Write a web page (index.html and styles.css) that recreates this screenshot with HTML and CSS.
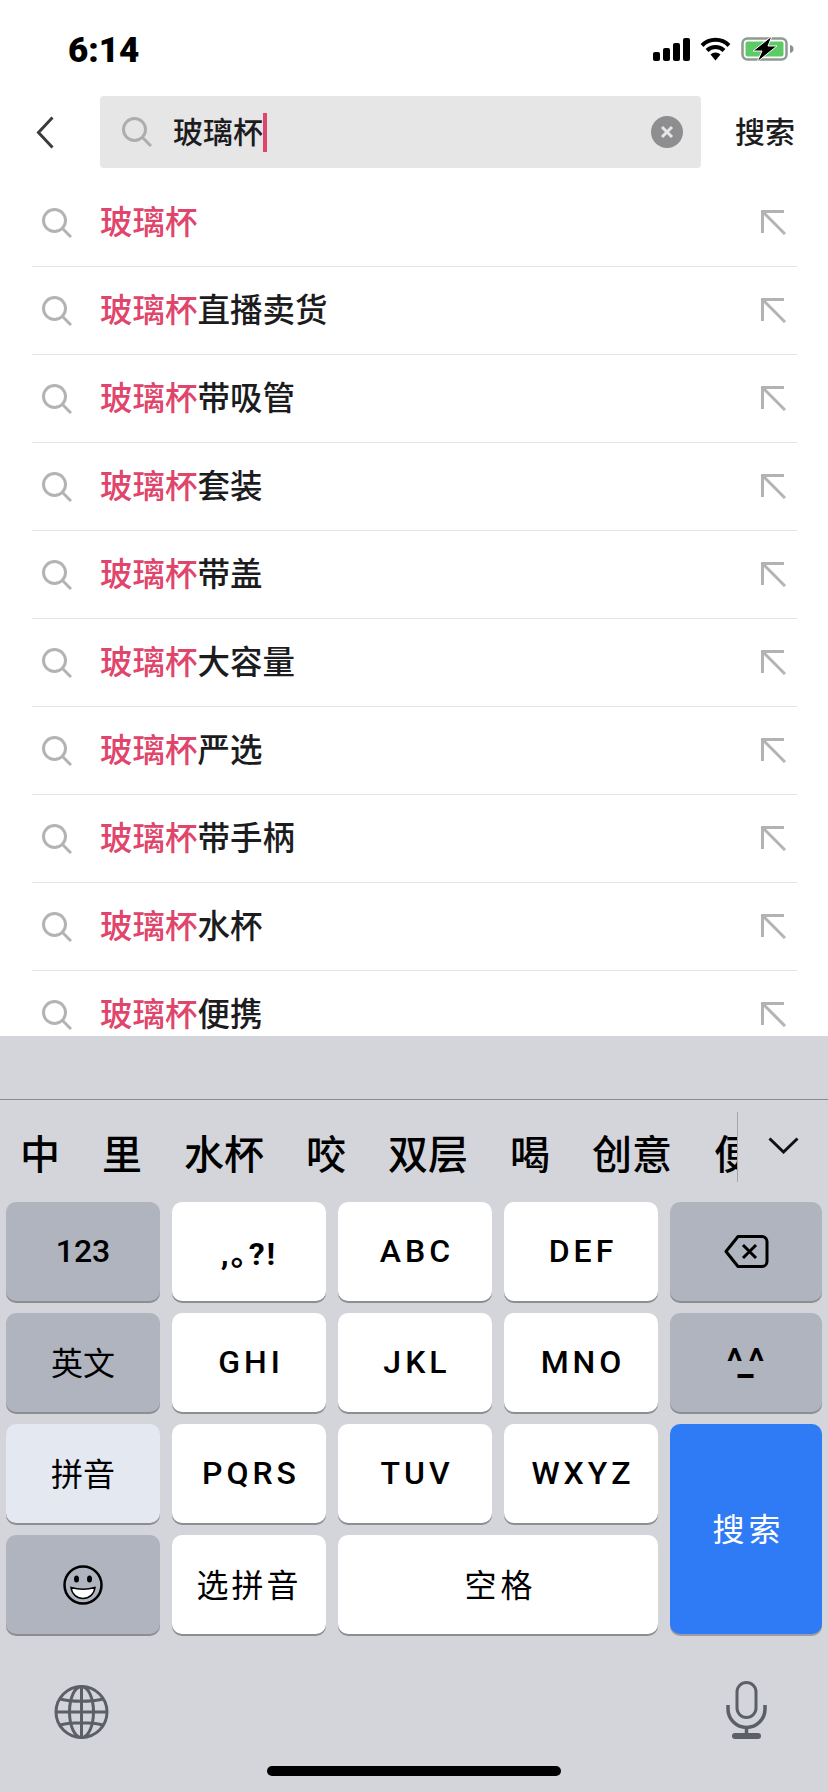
FILE: index.html
```html
<!DOCTYPE html>
<html lang="zh-CN">
<head>
    <meta charset="UTF-8">
    <meta name="viewport" content="width=device-width, initial-scale=1.0">
    <title>搜索</title>
    <link rel="stylesheet" href="styles.css">
</head>
<body>
    <div class="page">
        <div class="status-bar">
            <span class="time">6:14</span>
            <div class="status-icons">
                <svg width="37" height="23" viewBox="0 0 37 23"><rect x="0" y="14" width="7" height="9" rx="2"/><rect x="10" y="10" width="7" height="13" rx="2"/><rect x="20" y="5" width="7" height="18" rx="2"/><rect x="30" y="0" width="7" height="23" rx="2"/></svg>
                <svg width="31" height="24" viewBox="0 0 31 24"><path d="M2 8.500a19 19 0 0 1 27 0M7 13.500a12 12 0 0 1 17 0" fill="none" stroke="#000" stroke-width="4"/><path d="M10.500 17.500a7 7 0 0 1 10 0L15.500 23.500z"/></svg>
                <svg width="53" height="26" viewBox="0 0 53 26"><rect x="1.500" y="2.500" width="44" height="21" rx="5" fill="#fff" stroke="#8f9a90" stroke-width="2.500"/><rect x="4.500" y="5.500" width="38" height="15" rx="2" fill="#5ccb66"/><path d="M49 9c2.500 .5 3.500 2 3.500 4s-1 3.500-3.500 4z" fill="#8f8f93"/><path d="M31 0L12 15h9l-5 11 20-16h-9z" stroke="#fff" stroke-width="1"/></svg>
            </div>
        </div>

        <div class="search-row">
            <svg class="back" width="18" height="33" viewBox="0 0 18 33"><path d="M16.500 1.500L2.500 16.500 16.500 31.500" fill="none" stroke="#3c3c3e" stroke-width="3"/></svg>
            <div class="search-box">
                <svg class="icon-search" width="30" height="30" viewBox="0 0 30 30"><circle cx="12.500" cy="12.500" r="11" fill="none" stroke="#adadad" stroke-width="3"/><path d="M20.500 20.500L29 29" stroke="#adadad" stroke-width="3"/></svg>
                <span class="query">玻璃杯</span><span class="caret"></span>
                <svg class="clear" width="32" height="32" viewBox="0 0 32 32"><circle cx="16" cy="16" r="16" fill="#8e8e90"/><path d="M11 11l10 10M21 11L11 21" stroke="#e6e6e6" stroke-width="3"/></svg>
            </div>
            <span class="search-btn">搜索</span>
        </div>

        <div class="suggest-list">
            <div class="suggest-row"><svg class="icon-search" width="30" height="30" viewBox="0 0 30 30"><circle cx="12.500" cy="12.500" r="11" fill="none" stroke="#b3b3b3" stroke-width="3"/><path d="M20.500 20.500L29 29" stroke="#b3b3b3" stroke-width="3"/></svg><span class="suggest-text"><em>玻璃杯</em></span><svg class="icon-fill" width="25" height="25" viewBox="0 0 25 25"><path d="M1.500 23V1.500H23M1.500 1.500L24 24" fill="none" stroke="#b3b3b3" stroke-width="3"/></svg></div>
            <div class="suggest-row"><svg class="icon-search" width="30" height="30" viewBox="0 0 30 30"><circle cx="12.500" cy="12.500" r="11" fill="none" stroke="#b3b3b3" stroke-width="3"/><path d="M20.500 20.500L29 29" stroke="#b3b3b3" stroke-width="3"/></svg><span class="suggest-text"><em>玻璃杯</em>直播卖货</span><svg class="icon-fill" width="25" height="25" viewBox="0 0 25 25"><path d="M1.500 23V1.500H23M1.500 1.500L24 24" fill="none" stroke="#b3b3b3" stroke-width="3"/></svg></div>
            <div class="suggest-row"><svg class="icon-search" width="30" height="30" viewBox="0 0 30 30"><circle cx="12.500" cy="12.500" r="11" fill="none" stroke="#b3b3b3" stroke-width="3"/><path d="M20.500 20.500L29 29" stroke="#b3b3b3" stroke-width="3"/></svg><span class="suggest-text"><em>玻璃杯</em>带吸管</span><svg class="icon-fill" width="25" height="25" viewBox="0 0 25 25"><path d="M1.500 23V1.500H23M1.500 1.500L24 24" fill="none" stroke="#b3b3b3" stroke-width="3"/></svg></div>
            <div class="suggest-row"><svg class="icon-search" width="30" height="30" viewBox="0 0 30 30"><circle cx="12.500" cy="12.500" r="11" fill="none" stroke="#b3b3b3" stroke-width="3"/><path d="M20.500 20.500L29 29" stroke="#b3b3b3" stroke-width="3"/></svg><span class="suggest-text"><em>玻璃杯</em>套装</span><svg class="icon-fill" width="25" height="25" viewBox="0 0 25 25"><path d="M1.500 23V1.500H23M1.500 1.500L24 24" fill="none" stroke="#b3b3b3" stroke-width="3"/></svg></div>
            <div class="suggest-row"><svg class="icon-search" width="30" height="30" viewBox="0 0 30 30"><circle cx="12.500" cy="12.500" r="11" fill="none" stroke="#b3b3b3" stroke-width="3"/><path d="M20.500 20.500L29 29" stroke="#b3b3b3" stroke-width="3"/></svg><span class="suggest-text"><em>玻璃杯</em>带盖</span><svg class="icon-fill" width="25" height="25" viewBox="0 0 25 25"><path d="M1.500 23V1.500H23M1.500 1.500L24 24" fill="none" stroke="#b3b3b3" stroke-width="3"/></svg></div>
            <div class="suggest-row"><svg class="icon-search" width="30" height="30" viewBox="0 0 30 30"><circle cx="12.500" cy="12.500" r="11" fill="none" stroke="#b3b3b3" stroke-width="3"/><path d="M20.500 20.500L29 29" stroke="#b3b3b3" stroke-width="3"/></svg><span class="suggest-text"><em>玻璃杯</em>大容量</span><svg class="icon-fill" width="25" height="25" viewBox="0 0 25 25"><path d="M1.500 23V1.500H23M1.500 1.500L24 24" fill="none" stroke="#b3b3b3" stroke-width="3"/></svg></div>
            <div class="suggest-row"><svg class="icon-search" width="30" height="30" viewBox="0 0 30 30"><circle cx="12.500" cy="12.500" r="11" fill="none" stroke="#b3b3b3" stroke-width="3"/><path d="M20.500 20.500L29 29" stroke="#b3b3b3" stroke-width="3"/></svg><span class="suggest-text"><em>玻璃杯</em>严选</span><svg class="icon-fill" width="25" height="25" viewBox="0 0 25 25"><path d="M1.500 23V1.500H23M1.500 1.500L24 24" fill="none" stroke="#b3b3b3" stroke-width="3"/></svg></div>
            <div class="suggest-row"><svg class="icon-search" width="30" height="30" viewBox="0 0 30 30"><circle cx="12.500" cy="12.500" r="11" fill="none" stroke="#b3b3b3" stroke-width="3"/><path d="M20.500 20.500L29 29" stroke="#b3b3b3" stroke-width="3"/></svg><span class="suggest-text"><em>玻璃杯</em>带手柄</span><svg class="icon-fill" width="25" height="25" viewBox="0 0 25 25"><path d="M1.500 23V1.500H23M1.500 1.500L24 24" fill="none" stroke="#b3b3b3" stroke-width="3"/></svg></div>
            <div class="suggest-row"><svg class="icon-search" width="30" height="30" viewBox="0 0 30 30"><circle cx="12.500" cy="12.500" r="11" fill="none" stroke="#b3b3b3" stroke-width="3"/><path d="M20.500 20.500L29 29" stroke="#b3b3b3" stroke-width="3"/></svg><span class="suggest-text"><em>玻璃杯</em>水杯</span><svg class="icon-fill" width="25" height="25" viewBox="0 0 25 25"><path d="M1.500 23V1.500H23M1.500 1.500L24 24" fill="none" stroke="#b3b3b3" stroke-width="3"/></svg></div>
            <div class="suggest-row"><svg class="icon-search" width="30" height="30" viewBox="0 0 30 30"><circle cx="12.500" cy="12.500" r="11" fill="none" stroke="#b3b3b3" stroke-width="3"/><path d="M20.500 20.500L29 29" stroke="#b3b3b3" stroke-width="3"/></svg><span class="suggest-text"><em>玻璃杯</em>便携</span><svg class="icon-fill" width="25" height="25" viewBox="0 0 25 25"><path d="M1.500 23V1.500H23M1.500 1.500L24 24" fill="none" stroke="#b3b3b3" stroke-width="3"/></svg></div>
        </div>

        <div class="keyboard">
            <div class="kb-top"></div>
            <div class="candidates">
                <div class="candidate-scroll">
                    <span>中</span><span>里</span><span>水杯</span><span>咬</span><span>双层</span><span>喝</span><span>创意</span><span>便携</span>
                </div>
                <svg class="cand-more" width="31" height="17" viewBox="0 0 31 17"><path d="M1.500 1.500L15.500 15 29.500 1.500" fill="none" stroke="#111" stroke-width="3"/></svg>
            </div>

            <div class="keys">
                <div class="key dark latin">123</div>
                <div class="key latin punct">,｡?!</div>
                <div class="key latin spaced">ABC</div>
                <div class="key latin spaced">DEF</div>
                <div class="key dark">
                    <svg width="45" height="33" viewBox="0 0 45 33"><path d="M14 1.500H38a5 5 0 0 1 5 5v20a5 5 0 0 1-5 5H14L2 16.500z" fill="none" stroke="#000" stroke-width="3" stroke-linejoin="round"/><path d="M19 10l13 13M32 10L19 23" stroke="#000" stroke-width="3"/></svg>
                </div>

                <div class="key dark cjk">英文</div>
                <div class="key latin spaced">GHI</div>
                <div class="key latin spaced">JKL</div>
                <div class="key latin spaced">MNO</div>
                <div class="key dark latin face">^_^</div>

                <div class="key light cjk">拼音</div>
                <div class="key latin spaced">PQRS</div>
                <div class="key latin spaced">TUV</div>
                <div class="key latin spaced">WXYZ</div>
                <div class="key blue cjk wide-text">搜索</div>

                <div class="key dark">
                    <svg width="40" height="40" viewBox="0 0 40 40"><circle cx="20" cy="20" r="18.500" fill="none" stroke="#000" stroke-width="2.500"/><ellipse cx="13.500" cy="14" rx="2.500" ry="3.500"/><ellipse cx="26.500" cy="14" rx="2.500" ry="3.500"/><path d="M8 22.500c7 2 17 2 24 0-1 7-6 11-12 11s-11-4-12-11z" stroke="#000" stroke-width="1.500" fill="#fff"/></svg>
                </div>
                <div class="key cjk spaced-cjk">选拼音</div>
                <div class="key cjk wide-text space-key">空格</div>
            </div>

            <div class="kb-bottom">
                <svg width="55" height="54" viewBox="0 0 55 54" fill="none" stroke="#5d5f67" stroke-width="3"><circle cx="27.500" cy="27" r="25.500"/><ellipse cx="27.500" cy="27" rx="12" ry="25.500"/><path d="M27.500 1.500v51M2 27h51M6 14c12 3 31 3 43 0M6 40c12-3 31-3 43 0"/></svg>
                <svg width="41" height="58" viewBox="0 0 41 58"><rect x="11" y="1.500" width="19" height="35" rx="9.500" fill="none" stroke="#5d5f67" stroke-width="3"/><path d="M2 24v4a18.500 18.500 0 0 0 37 0v-4" fill="none" stroke="#5d5f67" stroke-width="3.500"/><path d="M20.500 46v8" stroke="#5d5f67" stroke-width="3.500"/><rect x="6" y="52" width="29" height="6" rx="3" fill="#5d5f67"/></svg>
            </div>
            <div class="home-bar"></div>
        </div>
    </div>
</body>
</html>
```

FILE: styles.css
```css
* {
    box-sizing: border-box;
}
body {
    margin: 0;
    background-color: #fff;
    font-family: "Noto Sans CJK SC", Roboto, sans-serif;
    color: #1c1c1e;
}
svg {
    display: block;
    flex-shrink: 0;
}
.page {
    width: 828px;
    height: 1792px;
    display: flex;
    flex-direction: column;
    overflow: hidden;
}

/* status bar */
.status-bar {
    height: 96px;
    padding: 37px 34px 0 68px;
    display: flex;
    justify-content: space-between;
    align-items: flex-start;
}
.time {
    font-family: Roboto, sans-serif;
    font-weight: 900;
    font-size: 35px;
    line-height: 28px;
    color: #000;
}
.status-icons {
    display: flex;
    align-items: center;
    gap: 10px;
    margin-top: -1px;
}

/* search */
.search-row {
    height: 72px;
    margin-bottom: 11px;
    padding: 0 33px 0 36px;
    display: flex;
    align-items: center;
}
.back {
    margin-right: 46px;
}
.search-box {
    width: 601px;
    height: 72px;
    padding: 0 18px 0 22px;
    display: flex;
    align-items: center;
    background-color: #e6e6e6;
    border-radius: 4px;
}
.query {
    margin-left: 21px;
    padding-bottom: 4px;
    font-size: 30px;
    font-weight: 500;
    line-height: 40px;
}
.caret {
    width: 4px;
    height: 39px;
    background-color: #e0456b;
}
.clear {
    margin-left: auto;
}
.search-btn {
    margin-left: 34px;
    padding-bottom: 4px;
    font-size: 30px;
    font-weight: 500;
    line-height: 40px;
}

/* suggestions */
.suggest-list {
    height: 857px;
    overflow: hidden;
}
.suggest-row {
    height: 88px;
    margin: 0 31px 0 32px;
    padding: 0 11px 0 10px;
    display: flex;
    align-items: center;
    border-bottom: 1px solid #e4e4e7;
}
.suggest-text {
    margin-left: 28px;
    padding-bottom: 5px;
    font-size: 32.500px;
    font-weight: 500;
    line-height: 44px;
}
.suggest-text em {
    font-style: normal;
    color: #e0456b;
}
.icon-fill {
    margin-left: auto;
}

/* keyboard */
.keyboard {
    flex: 1;
    background-color: #d3d5da;
}
.kb-top {
    height: 64px;
    border-bottom: 1px solid #8a8b8f;
}
.candidates {
    height: 102px;
    padding-top: 12px;
    display: flex;
    align-items: flex-start;
}
.candidate-scroll {
    width: 738px;
    height: 70px;
    padding: 10px 0 0 20px;
    display: flex;
    align-items: center;
    gap: 42px;
    overflow: hidden;
    border-right: 1px solid #a4a5aa;
    font-size: 40px;
    font-weight: 500;
    line-height: 50px;
    color: #000;
    white-space: nowrap;
}
.candidate-scroll span {
    flex-shrink: 0;
}
.cand-more {
    margin: 25px 0 0 30px;
}
.keys {
    padding: 0 6px;
    display: grid;
    grid-template-columns: 154px 154px 154px 154px 152px;
    grid-template-rows: repeat(4, 99px);
    gap: 12px;
}
.key {
    display: flex;
    align-items: center;
    justify-content: center;
    background-color: #fff;
    border-radius: 10px;
    box-shadow: 0 2px 0 #8d8e92;
    color: #000;
}
.key.dark {
    background-color: #b0b4be;
}
.key.light {
    background-color: #e4e8f0;
}
.key.blue {
    grid-column: 5;
    grid-row: 3 / span 2;
    background-color: #2f7af5;
    box-shadow: 0 2px 0 #9a9ca6;
    color: #fff;
}
.space-key {
    grid-column: 3 / span 2;
    padding-left: 5px;
}
.latin {
    padding-bottom: 2px;
    font-family: Roboto, sans-serif;
    font-size: 32px;
    font-weight: 500;
}
.spaced {
    padding-left: 4px;
    letter-spacing: 4px;
}
.punct {
    font-family: Roboto, "Noto Sans CJK SC", sans-serif;
    font-weight: 700;
    letter-spacing: 2px;
}
.face {
    padding-right: 6px;
    font-size: 36px;
    font-weight: 700;
    letter-spacing: -5px;
}
.cjk {
    padding-bottom: 4px;
    font-size: 32px;
    line-height: 40px;
}
.spaced-cjk {
    letter-spacing: 3px;
}
.wide-text {
    padding-left: 5px;
    letter-spacing: 4px;
}
.kb-bottom {
    padding: 47px 61px 0 54px;
    display: flex;
    justify-content: space-between;
    align-items: flex-end;
}
.home-bar {
    width: 294px;
    height: 10px;
    margin: 27px auto 0;
    background-color: #000;
    border-radius: 5px;
}
```
